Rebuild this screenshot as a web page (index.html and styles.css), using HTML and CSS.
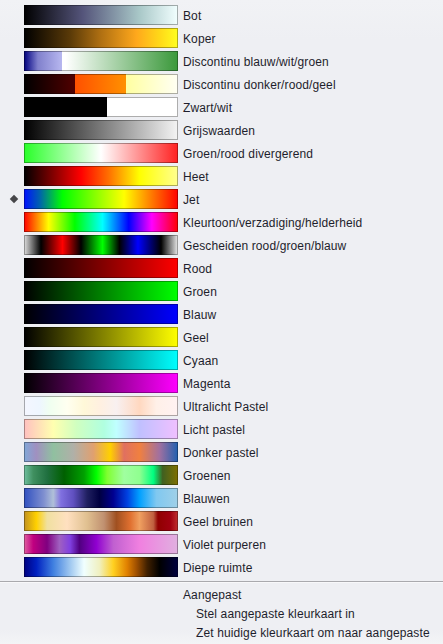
FILE: index.html
```html
<!DOCTYPE html>
<html lang="nl">
<head>
<meta charset="utf-8">
<title>Kleurkaarten</title>
<link rel="stylesheet" href="styles.css">
</head>
<body>
<div class="menu">
  <ul class="maps">
    <li class="item"><span class="mark"></span><span class="bar g-bot"></span><span class="label">Bot</span></li>
    <li class="item"><span class="mark"></span><span class="bar g-koper"></span><span class="label">Koper</span></li>
    <li class="item"><span class="mark"></span><span class="bar g-bwg"></span><span class="label">Discontinu blauw/wit/groen</span></li>
    <li class="item"><span class="mark"></span><span class="bar g-drg"></span><span class="label">Discontinu donker/rood/geel</span></li>
    <li class="item"><span class="mark"></span><span class="bar g-zw"></span><span class="label">Zwart/wit</span></li>
    <li class="item"><span class="mark"></span><span class="bar g-grijs"></span><span class="label">Grijswaarden</span></li>
    <li class="item"><span class="mark"></span><span class="bar g-gr"></span><span class="label">Groen/rood divergerend</span></li>
    <li class="item"><span class="mark"></span><span class="bar g-heet"></span><span class="label">Heet</span></li>
    <li class="item selected"><span class="mark"></span><span class="bar g-jet"></span><span class="label">Jet</span></li>
    <li class="item"><span class="mark"></span><span class="bar g-hue"></span><span class="label">Kleurtoon/verzadiging/helderheid</span></li>
    <li class="item"><span class="mark"></span><span class="bar g-rgb"></span><span class="label">Gescheiden rood/groen/blauw</span></li>
    <li class="item"><span class="mark"></span><span class="bar g-rood"></span><span class="label">Rood</span></li>
    <li class="item"><span class="mark"></span><span class="bar g-groen"></span><span class="label">Groen</span></li>
    <li class="item"><span class="mark"></span><span class="bar g-blauw"></span><span class="label">Blauw</span></li>
    <li class="item"><span class="mark"></span><span class="bar g-geel"></span><span class="label">Geel</span></li>
    <li class="item"><span class="mark"></span><span class="bar g-cyaan"></span><span class="label">Cyaan</span></li>
    <li class="item"><span class="mark"></span><span class="bar g-magenta"></span><span class="label">Magenta</span></li>
    <li class="item"><span class="mark"></span><span class="bar g-ultra"></span><span class="label">Ultralicht Pastel</span></li>
    <li class="item"><span class="mark"></span><span class="bar g-licht"></span><span class="label">Licht pastel</span></li>
    <li class="item"><span class="mark"></span><span class="bar g-donker"></span><span class="label">Donker pastel</span></li>
    <li class="item"><span class="mark"></span><span class="bar g-groenen"></span><span class="label">Groenen</span></li>
    <li class="item"><span class="mark"></span><span class="bar g-blauwen"></span><span class="label">Blauwen</span></li>
    <li class="item"><span class="mark"></span><span class="bar g-bruin"></span><span class="label">Geel bruinen</span></li>
    <li class="item"><span class="mark"></span><span class="bar g-violet"></span><span class="label">Violet purperen</span></li>
    <li class="item"><span class="mark"></span><span class="bar g-diep"></span><span class="label">Diepe ruimte</span></li>
  </ul>
  <div class="separator"></div>
  <div class="custom">
    <div class="heading">Aangepast</div>
    <div class="sub">Stel aangepaste kleurkaart in</div>
    <div class="sub">Zet huidige kleurkaart om naar aangepaste</div>
  </div>
</div>
</body>
</html>
```

FILE: styles.css
```css
html, body {
  margin: 0;
  padding: 0;
}
body {
  background: #eeeff3;
  font-family: "Liberation Sans", Arial, sans-serif;
  font-size: 12px;
  letter-spacing: 0.12px;
  color: #1e1e2c;
  width: 443px;
  height: 644px;
  overflow: hidden;
}
.menu {
  height: 644px;
  background: linear-gradient(to bottom, #f1f2f5 0px, #eeeff3 40px, #eeeff3 630px, #f3f4f6 644px);
}
.maps {
  list-style: none;
  margin: 0;
  padding: 5px 0 0 0;
  display: flex;
  flex-direction: column;
  gap: 3px;
}
.item {
  display: flex;
  align-items: center;
  height: 20px;
}
.mark {
  width: 24px;
  height: 20px;
  display: flex;
  align-items: center;
  justify-content: center;
}
.selected .mark::before {
  content: "";
  width: 6px;
  height: 6px;
  background: #464649;
  transform: rotate(45deg);
  margin-left: 4px;
}
.bar {
  box-sizing: border-box;
  width: 154px;
  height: 20px;
  border: 1px solid rgba(0, 0, 0, 0.32);
  background-origin: border-box;
  flex: none;
}
.label {
  margin-left: 5px;
  white-space: nowrap;
  line-height: 20px;
  padding-top: 1px;
}
.separator {
  margin-top: 4px;
  height: 1px;
  background: #a9a9ad;
  border-bottom: 1px solid #f8f8fa;
}
.custom {
  padding-top: 3px;
  padding-left: 183px;
}
.heading, .sub {
  height: 19px;
  line-height: 19px;
  white-space: nowrap;
}
.sub {
  padding-left: 13px;
}

.g-bot { background-image: linear-gradient(to right, #000000, #54547a 38%, #a9c8c8 75%, #f2ffff); }
.g-koper { background-image: linear-gradient(to right, #000000, #5a3a08 30%, #b07012 50%, #ffa81c 73%, #ffd818 88%, #ffff20); }
.g-bwg { background-image: linear-gradient(to right, #00007a 0%, #2a2a9a 3%, #8080cc 9%, #b8b8f0 25%, #ffffff 25%, #ffffff 27%, #3a983a 100%); }
.g-drg { background-image: linear-gradient(to right, #000000 0%, #500000 33%, #ff5000 33%, #ff9000 66%, #ffffa0 66%, #fffff4 100%); }
.g-zw { background-image: linear-gradient(to right, #000000 0%, #000000 54%, #ffffff 54%, #ffffff 100%); }
.g-grijs { background-image: linear-gradient(to right, #000000, #f4f4f4); }
.g-gr { background-image: linear-gradient(to right, #28ff28, #ffffff 50%, #ff2020); }
.g-heet { background-image: linear-gradient(to right, #000000, #ff0000 37%, #ff7000 55%, #ffff00 75%, #ffff90); }
.g-jet { background-image: linear-gradient(to right, #0010ff, #0060b0 10%, #00ff00 25%, #80ff00 45%, #ffff00 65%, #ff8000 82%, #ff0000); }
.g-hue { background-image: linear-gradient(to right, #ff0000, #ffff00 16%, #00ff00 33%, #00ffff 51%, #0000ff 68%, #ff00ff 83%, #ff0000); }
.g-rgb { background-image: linear-gradient(to right, #e0e0e0, #000000 11%, #ff0000 25%, #000000 37%, #00ff00 51%, #000000 62%, #0000ff 74%, #000000 89%, #ececec); }
.g-rood { background-image: linear-gradient(to right, #000000, #ff0000); }
.g-groen { background-image: linear-gradient(to right, #000000, #00ff00); }
.g-blauw { background-image: linear-gradient(to right, #000000, #0000ff); }
.g-geel { background-image: linear-gradient(to right, #000000, #ffff00); }
.g-cyaan { background-image: linear-gradient(to right, #000000, #00ffff); }
.g-magenta { background-image: linear-gradient(to right, #000000, #ff00ff); }
.g-ultra { background-image: linear-gradient(to right, #f4f6ff, #eef6ff 10%, #f0fff0 17%, #fffff0 28%, #fff8d8 39%, #fff0e0 49%, #f8f0f0 60%, #ffd8c0 75%, #fff0e8 86%, #fff2f2); }
.g-licht { background-image: linear-gradient(to right, #ffc0c0, #ffffb0 19%, #d0ffc0 34%, #b0ffe0 52%, #c0ffff 60%, #c0c0ff 75%, #f0c0ff); }
.g-donker { background-image: linear-gradient(to right, #80a8d8, #a090c0 8%, #90c0a0 19%, #b0b0a8 32%, #e0a070 45%, #ffd000 56%, #e07060 65%, #f08040 75%, #a070a0 88%, #2060b0); }
.g-groenen { background-image: linear-gradient(to right, #70c0a0, #409060 6%, #207040 15%, #006000 26%, #00a000 39%, #00ff00 47%, #80ff30 54%, #a0ffa0 65%, #90ff90 75%, #00ff80 84%, #406020 90%, #807000); }
.g-blauwen { background-image: linear-gradient(to right, #3050c0, #8090d0 13%, #b0c0d8 19%, #8070e0 24%, #6050c0 32%, #202060 41%, #000040 49%, #000090 58%, #0040e0 67%, #00a0ff 75%, #80c8f0 86%, #a0d0e8); }
.g-bruin { background-image: linear-gradient(to right, #c09020, #ffd000 8%, #f0e0a0 15%, #ffe0c0 28%, #e0c090 41%, #c09070 52%, #a05020 60%, #e07030 69%, #f0a060 75%, #c06040 84%, #900000 87%, #a00010 95%, #c03030); }
.g-violet { background-image: linear-gradient(to right, #e060a0, #c00080 6%, #800080 15%, #a060c0 23%, #8040e0 30%, #500080 36%, #9000d0 47%, #c060d0 58%, #f080e0 75%, #e0b0e0); }
.g-diep { background-image: linear-gradient(to right, #000080, #0020c0 8%, #4080e0 19%, #a0c8f0 30%, #f0ffff 39%, #f0f0c0 49%, #ffd020 58%, #e08000 67%, #a05000 73%, #402000 80%, #000000 88%, #000040); }
```
